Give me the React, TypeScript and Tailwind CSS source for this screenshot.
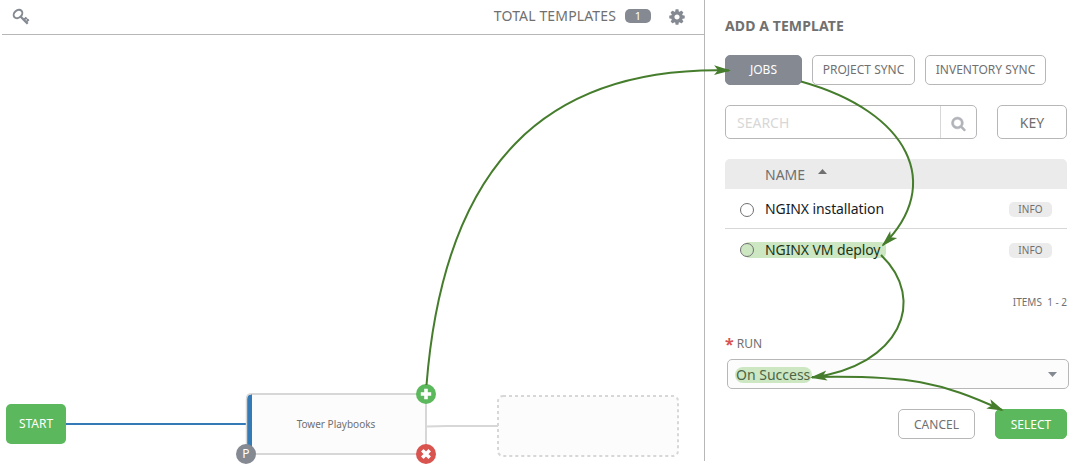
import type { ReactNode } from 'react';

const COG =
  'M1152 896q0-106-75-181t-181-75-181 75-75 181 75 181 181 75 181-75 75-181zm512-109v222q0 12-8 23t-20 13l-185 28q-19 54-39 91 35 50 107 138 10 12 10 25t-9 23q-27 37-99 108t-94 71q-12 0-26-9l-138-108q-44 23-91 38-16 136-29 186-7 28-36 28h-222q-14 0-24.5-8.5t-11.5-21.5l-28-184q-49-16-90-37l-141 107q-10 9-25 9-14 0-25-11-126-114-165-168-7-10-7-23 0-12 8-23 15-21 51-66.5t54-70.5q-27-50-41-99l-183-27q-13-2-21-12.5t-8-23.5v-222q0-12 8-23t19-13l186-28q14-46 39-92-40-57-107-138-10-12-10-24 0-10 9-23 26-36 98.5-107.5t94.5-71.5q13 0 26 10l138 107q44-23 91-38 16-136 29-186 7-28 36-28h222q14 0 24.5 8.5t11.5 21.5l28 184q49 16 90 37l142-107q9-9 24-9 13 0 25 10 129 119 165 170 7 8 7 22 0 12-8 23-15 21-51 66.5t-54 70.5q26 50 41 98l183 28q13 2 21 12.5t8 23.5z';
const SEARCH =
  'M1216 832q0-185-131.5-316.5t-316.5-131.5-316.5 131.5-131.5 316.5 131.5 316.5 316.5 131.5 316.5-131.5 131.5-316.5zm512 832q0 52-38 90t-90 38q-54 0-90-38l-343-342q-179 124-399 124-143 0-273.5-55.5t-225-150-150-225-55.5-273.5 55.5-273.5 150-225 225-150 273.5-55.5 273.5 55.5 225 150 150 225 55.5 273.5q0 220-124 399l343 343q37 37 37 90z';

function Icon({ d, className }: { d: string; className: string }) {
  return (
    <svg viewBox="0 0 1792 1792" fill="currentColor" stroke="currentColor" className={`overflow-visible ${className}`}>
      <path d={d} />
    </svg>
  );
}

function KeyIcon() {
  return (
    <svg width="18" height="18" viewBox="0 0 18 18" fill="none" stroke="#848992">
      <ellipse cx="6" cy="6" rx="4.700" ry="3.700" strokeWidth="2" transform="rotate(-40 6 6)" />
      <path d="M8.500 8.500L15.700 15.800" strokeWidth="2.300" />
      <path d="M11.800 12L14.300 9.500M13.900 14.100L16.800 11.600" strokeWidth="1.900" />
      <path d="M13.600 9.800L16.600 12.600" strokeWidth="1.300" />
    </svg>
  );
}

function Button({ className, children }: { className: string; children: ReactNode }) {
  return (
    <button className={`flex items-center justify-center rounded-[5px] border whitespace-nowrap ${className}`}>
      {children}
    </button>
  );
}

function TemplateRow({ name, picked }: { name: string; picked?: boolean }) {
  return (
    <div className={`flex items-center justify-between px-[15px] ${picked ? 'h-[42px]' : 'h-[39px] pt-[2px]'}`}>
      <div className="relative flex items-center">
        {picked && <span className="absolute top-[2px] left-1 h-4 w-[142px] rounded-[5px] bg-[#cce7c2]" />}
        <span
          className={`relative mr-[11px] h-[14px] w-[14px] rounded-full border border-[#707070] ${picked ? 'bg-[#cce7c2]' : ''}`}
        />
        <span
          className={`relative text-sm leading-5 tracking-[-0.1px] ${picked ? 'text-[#1d3317]' : '-top-px text-[#161b1f]'}`}
        >
          {name}
        </span>
      </div>
      <span className="flex h-[15px] w-[43px] items-center justify-center rounded-[5px] bg-[#ebebeb] text-[10px] tracking-[0.1px] text-[#707070]">
        INFO
      </span>
    </div>
  );
}

function Workflow() {
  return (
    <section className="relative h-[461px] w-[705px] border-r border-[#b7b7b7]">
      <header className="ml-[2px] flex h-[35px] items-center justify-between border-b border-[#b7b7b7] pr-[18px] pl-[10px]">
        <KeyIcon />
        <div className="flex items-center text-[#707070]">
          <span className="-mt-[2px] text-sm tracking-[0.14px]">TOTAL TEMPLATES</span>
          <span className="mt-[-2px] mr-[17px] ml-[9px] flex h-[14px] w-[26px] items-center justify-center rounded-[5px] bg-[#848992] text-[11px] text-white">
            1
          </span>
          <Icon d={COG} className="h-[18px] w-[18px] text-[#848992] [stroke-width:0]" />
        </div>
      </header>

      <svg className="absolute top-0 left-0" width="704" height="469">
        <path d="M66 424H247" stroke="#337ab7" strokeWidth="2" />
        <path d="M427 426.5L447 426L498 426" stroke="#d7d7d7" strokeWidth="2" fill="none" />
        <rect x="247" y="394" width="179" height="60" rx="5" fill="#fcfcfc" stroke="#d7d7d7" strokeWidth="2" />
        <path d="M252 394.500H250Q247 395 247 399V454H252Z" fill="#337ab7" />
        <path d="M246.500 454V399Q246.500 394 251 394" stroke="#d7d7d7" strokeWidth="1.500" fill="none" />
        <rect x="498" y="396" width="180" height="60" rx="5" fill="#fcfcfc" stroke="#d7d7d7" strokeWidth="2" strokeDasharray="3" />
        <circle cx="246" cy="454" r="10" fill="#848992" />
        <circle cx="426" cy="394" r="10" fill="#5cb85c" />
        <path d="M426 388.800V399.200M420.800 394H431.200" stroke="#fff" strokeWidth="3.600" />
        <circle cx="426" cy="454" r="10" fill="#d9534f" />
        <path d="M422.300 450.300L429.700 457.700M429.700 450.300L422.300 457.700" stroke="#fff" strokeWidth="3.600" />
      </svg>
      <button className="absolute top-[404px] left-[6px] h-10 w-[60px] rounded-[5px] bg-[#5cb85c] text-xs text-white">
        START
      </button>
      <span className="absolute top-[417px] left-[246px] w-[180px] text-center text-[10px] leading-[15px] text-[#707070]">
        Tower Playbooks
      </span>
      <span className="absolute top-[444px] left-[236px] w-5 text-center text-xs leading-5 text-white">P</span>
    </section>
  );
}

function AddTemplate() {
  return (
    <section className="ml-5 w-[344px] text-[#707070]">
      <h2 className="pt-4 text-sm leading-5 font-bold tracking-[0.1px]">ADD A TEMPLATE</h2>
      <div className="mt-[19px] flex h-[30px] text-xs">
        <Button className="mr-[10px] w-[77px] border-[#848992] bg-[#848992] text-white">JOBS</Button>
        <Button className="mr-[10px] w-[103px] border-[#b7b7b7]">PROJECT SYNC</Button>
        <Button className="w-[121px] border-[#b7b7b7]">INVENTORY SYNC</Button>
      </div>
      <div className="mt-5 flex h-[34px] w-[342px] justify-between text-sm">
        <div className="flex w-[252px] rounded-[5px] border border-[#b7b7b7]">
          <span className="flex flex-1 items-center pt-[2px] pl-[11px] text-[#d7d7d7]">SEARCH</span>
          <span className="flex w-9 items-center justify-center border-l border-[#d7d7d7]">
            <Icon d={SEARCH} className="mt-[3px] h-[15px] w-[15px] text-[#b0b3b9] [stroke-width:60]" />
          </span>
        </div>
        <Button className="w-[70px] border-[#b7b7b7] pt-[2px]">KEY</Button>
      </div>
      <div className="mt-5 w-[342px]">
        <div className="flex h-[30px] items-center rounded-t-[5px] bg-[#ebebeb] pt-[2px] pl-10 text-sm">
          NAME
          <svg width="9" height="5" className="mb-[7px] ml-[13px]">
            <path d="M0 5L4.500 0L9 5Z" fill="#707070" />
          </svg>
        </div>
        <div className="border-b border-[#d7d7d7]">
          <TemplateRow name="NGINX installation" />
        </div>
        <TemplateRow name="NGINX VM deploy" picked />
      </div>
      <div className="mt-6 w-[342px] text-right text-[10px] leading-[15px] whitespace-pre">ITEMS  1 - 2</div>
      <div className="mt-6 flex h-5 items-center text-xs">
        <span className="mr-[3px] text-base leading-5 font-bold text-[#d9534f]">*</span>RUN
      </div>
      <div className="mt-[5px] ml-[2px] flex h-[30px] w-[342px] items-center justify-between rounded-[5px] border border-[#b7b7b7] bg-[#fcfcfc] pr-[11px] pl-[7px]">
        <span className="mt-[2px] flex h-4 items-center rounded-lg bg-[#cce7c2] pr-[2px] pl-[1px] text-sm leading-4 text-[#4d6546]">
          On Success
        </span>
        <svg width="9" height="5">
          <path d="M0 0H9L4.500 5Z" fill="#848992" />
        </svg>
      </div>
      <div className="mt-5 flex h-[30px] w-[342px] justify-end gap-5 text-xs">
        <Button className="w-[77px] border-[#b7b7b7] pt-[2px]">CANCEL</Button>
        <Button className="w-[72px] border-[#5cb85c] bg-[#5cb85c] pt-[2px] text-white">SELECT</Button>
      </div>
    </section>
  );
}

function Arrows() {
  return (
    <svg className="pointer-events-none absolute top-0 left-0" width="1078" height="469" fill="none" stroke="#457d2c" strokeWidth="2">
      <defs>
        <marker id="head" viewBox="0 0 17 12" refX="15" refY="6" markerWidth="17" markerHeight="12" markerUnits="userSpaceOnUse" orient="auto">
          <path d="M0 1L17 6L0 11L4 6Z" fill="#457d2c" stroke="none" />
        </marker>
      </defs>
      <path d="M426.500 385C444 164 546 66 729 70.500" markerEnd="url(#head)" />
      <path d="M801 81.500C910 112 944 185 883 245" markerEnd="url(#head)" />
      <path d="M881 255C928 300 900 366 812 377.500" markerEnd="url(#head)" />
      <path d="M812 377C910 375 940 382 1002 410" markerEnd="url(#head)" />
    </svg>
  );
}

export default function App() {
  return (
    <main className="relative flex h-[469px] w-[1078px] overflow-hidden bg-white font-['Noto_Sans','Open_Sans',sans-serif]">
      <Workflow />
      <AddTemplate />
      <Arrows />
    </main>
  );
}
